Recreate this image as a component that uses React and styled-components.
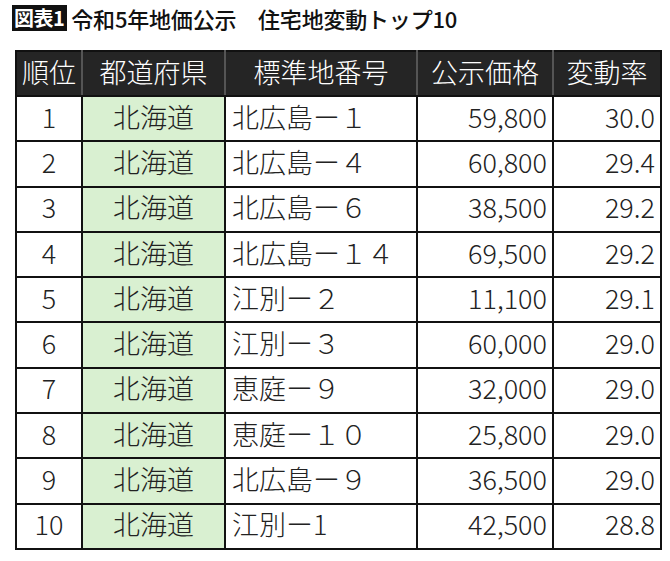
import React from "react";
import styled, { createGlobalStyle } from "styled-components";

const GlobalStyle = createGlobalStyle`
  body {
    margin: 0;
    background: #fff;
    font-family: "Noto Sans CJK JP", "Noto Sans", sans-serif;
  }
`

const Page = styled.div`
  width: 670px;
  height: 561px;
  padding: 5px 0 0 12px;
  box-sizing: border-box;
`

const Heading = styled.div`
  display: flex;
  align-items: center;
  gap: 4px;
  height: 26px;
  font-size: 22px;
  font-weight: 500;
  color: #111;
`

const Badge = styled.span`
  background: #111;
  color: #fff;
  padding: 0 3px 0 2px;
  height: 26px;
  line-height: 26px;
  font-size: 20px;
  font-weight: 700;
  letter-spacing: -0.5px;
`

const Title = styled.span`
  letter-spacing: -0.2px;
`

const Table = styled.table`
  margin: 19px 0 0 3px;
  border-collapse: collapse;
  table-layout: fixed;
  width: 645px;
  font-size: 27px;
  font-weight: 300;
  color: #222;
`

const Head = styled.th`
  height: 39px;
  padding: 0 0 4px;
  background: #252525;
  color: #fff;
  font-weight: 300;
  border: 2px solid #111;
  border-right-color: #555;
  text-align: center;
  line-height: 1;
  &:last-child { border-right-color: #111; }
`

const Cell = styled.td`
  height: 38.3px;
  padding: 0 ${p => (p.$align === "right" ? "5px" : "6px")} 5px;
  border: 2px solid #111;
  background: ${p => (p.$green ? "#d9f0d1" : "#fff")};
  text-align: ${p => p.$align || "left"};
  white-space: nowrap;
  line-height: 1;
`

const rows = [
  [1, "北広島ー１", "59,800", "30.0"],
  [2, "北広島ー４", "60,800", "29.4"],
  [3, "北広島ー６", "38,500", "29.2"],
  [4, "北広島ー１４", "69,500", "29.2"],
  [5, "江別ー２", "11,100", "29.1"],
  [6, "江別ー３", "60,000", "29.0"],
  [7, "恵庭ー９", "32,000", "29.0"],
  [8, "恵庭ー１０", "25,800", "29.0"],
  [9, "北広島ー９", "36,500", "29.0"],
  [10, "江別ー1", "42,500", "28.8"],
]

export default function App() {
  return (
    <Page>
      <GlobalStyle />
      <Heading>
        <Badge>図表1</Badge>
        <Title>令和5年地価公示　住宅地変動トップ10</Title>
      </Heading>
      <Table>
        <colgroup>
          <col style={{ width: 66 }} />
          <col style={{ width: 143 }} />
          <col style={{ width: 192 }} />
          <col style={{ width: 136 }} />
          <col style={{ width: 108 }} />
        </colgroup>
        <thead>
          <tr>
            <Head>順位</Head>
            <Head>都道府県</Head>
            <Head>標準地番号</Head>
            <Head>公示価格</Head>
            <Head>変動率</Head>
          </tr>
        </thead>
        <tbody>
          {rows.map(([rank, code, price, rate]) => (
            <tr key={rank}>
              <Cell $align="center">{rank}</Cell>
              <Cell $align="center" $green>北海道</Cell>
              <Cell>{code}</Cell>
              <Cell $align="right">{price}</Cell>
              <Cell $align="right">{rate}</Cell>
            </tr>
          ))}
        </tbody>
      </Table>
    </Page>
  );
}
